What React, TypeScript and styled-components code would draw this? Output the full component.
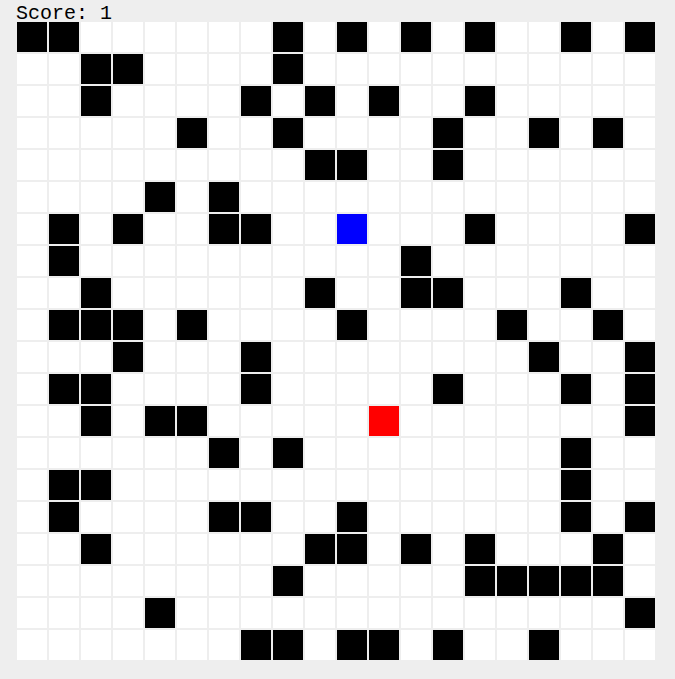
import { FC } from "react";
import styled, { createGlobalStyle } from "styled-components";

type CellKind = "empty" | "wall" | "player" | "food";

const gridSize = 20;

// wall positions per row, as column indexes
const walls: number[][] = [
  [0, 1, 8, 10, 12, 14, 17, 19],
  [2, 3, 8],
  [2, 7, 9, 11, 14],
  [5, 8, 13, 16, 18],
  [9, 10, 13],
  [4, 6],
  [1, 3, 6, 7, 14, 19],
  [1, 12],
  [2, 9, 12, 13, 17],
  [1, 2, 3, 5, 10, 15, 18],
  [3, 7, 16, 19],
  [1, 2, 7, 13, 17, 19],
  [2, 4, 5, 19],
  [6, 8, 17],
  [1, 2, 17],
  [1, 6, 7, 10, 17, 19],
  [2, 9, 10, 12, 14, 18],
  [8, 14, 15, 16, 17, 18],
  [4, 19],
  [7, 8, 10, 11, 13, 16],
];

const player = { row: 6, col: 10 };
const food = { row: 12, col: 11 };
const score = 1;

const cellKind = (row: number, col: number): CellKind => {
  if (row === player.row && col === player.col) return "player";
  if (row === food.row && col === food.col) return "food";
  if (walls[row].includes(col)) return "wall";
  return "empty";
};

const App: FC = () => {
  const cells = [];
  for (let row = 0; row < gridSize; row++) {
    for (let col = 0; col < gridSize; col++) {
      cells.push(<Cell key={`${row}-${col}`} $kind={cellKind(row, col)} />);
    }
  }
  return (
    <>
      <GlobalStyle />
      <GameContainer>
        <ScoreLine>Score: {score}</ScoreLine>
        <Board>{cells}</Board>
      </GameContainer>
    </>
  );
};

export default App;

const GlobalStyle = createGlobalStyle`
  html, body {
    margin: 0;
    padding: 0;
    background: #eeeeee;
  }
`;

const GameContainer = styled.div`
  display: flex;
  flex-direction: column;
  padding-left: 17px;
`;

const ScoreLine = styled.div`
  box-sizing: border-box;
  height: 22px;
  padding-top: 4px;
  margin-left: -1px;
  font-family: "Liberation Mono", "Courier New", monospace;
  font-size: 20px;
  line-height: 19px;
  color: #000000;
  white-space: pre;
`;

const cellColors: Record<CellKind, string> = {
  empty: "#ffffff",
  wall: "#000000",
  player: "#0000ff",
  food: "#ff0000",
};

const Board = styled.div`
  display: grid;
  grid-template-columns: repeat(${gridSize}, 30px);
  grid-auto-rows: 30px;
  gap: 2px;
  width: max-content;
`;

const Cell = styled.div<{ $kind: CellKind }>`
  background: ${(p) => cellColors[p.$kind]};
`;
